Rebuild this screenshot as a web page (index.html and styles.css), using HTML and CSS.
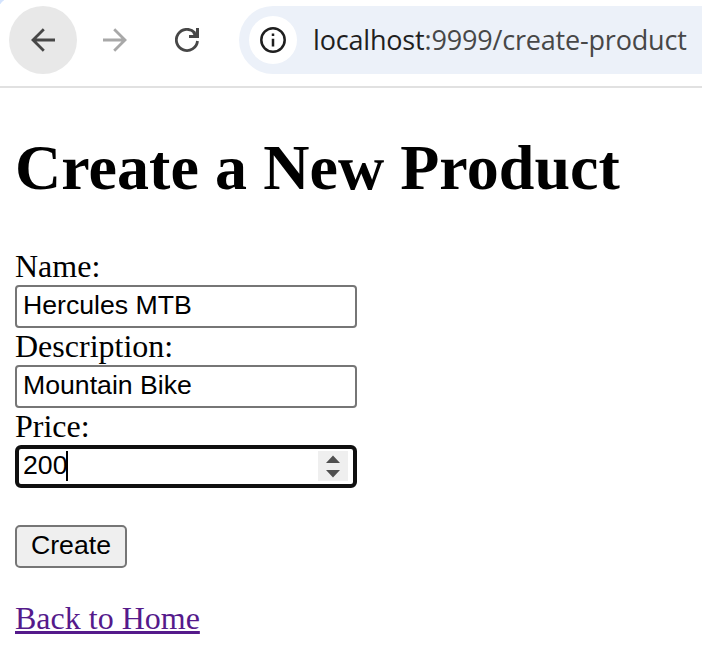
FILE: index.html
```html
<!DOCTYPE html>
<html lang="en">
<head>
<meta charset="utf-8">
<title>Create a New Product</title>
<link rel="stylesheet" href="styles.css">
</head>
<body>
<header class="toolbar">
  <span class="nav-button nav-button-active">
    <svg width="24" height="24" viewBox="0 0 24 24" fill="none" stroke="#474747" stroke-width="2.8"><path d="M24 12H2.500M12.800 1.200L2 12l10.800 10.800"/></svg>
  </span>
  <span class="nav-button">
    <svg width="24" height="24" viewBox="0 0 24 24" fill="none" stroke="#a8a8a8" stroke-width="2.8"><path d="M0 12h21.500M11.200 1.200L22 12 11.200 22.800"/></svg>
  </span>
  <span class="nav-button">
    <svg width="24" height="24" viewBox="0 0 24 24" fill="none" stroke="#474747" stroke-width="2.8"><path d="M22.500 13A10.600 10.600 0 1 1 19.800 4.800"/><path d="M21 0h3v10H14V7h4.500l-1-1.800 2-2L21 4.500z" fill="#474747" stroke="none"/></svg>
  </span>
  <div class="address">
    <span class="site-info">
      <svg width="26" height="26" viewBox="0 0 26 26" fill="none" stroke="#1f1f1f" stroke-width="2.500"><circle cx="13" cy="13" r="11.700"/><path d="M13 11.800v7.700M13 6.500v2.600"/></svg>
    </span>
    <span class="url"><span class="host">localhost</span>:9999/create-product</span>
  </div>
</header>
<main class="page">
  <h1>Create a New Product</h1>
  <form>
    <label for="name">Name:</label>
    <input id="name" class="field" type="text" value="Hercules MTB">
    <label for="description">Description:</label>
    <input id="description" class="field" type="text" value="Mountain Bike">
    <label for="price">Price:</label>
    <div class="price">
      <input id="price" class="field field-focused" type="text" value="200">
      <span class="caret"></span>
      <span class="spinner">
        <svg width="30" height="30" viewBox="0 0 30 30" fill="#505050"><path d="M8 12L15 4.500 22 12zM8 19h14l-7 7.500z"/></svg>
      </span>
    </div>
    <button type="button">Create</button>
  </form>
  <a href="#">Back to Home</a>
</main>
</body>
</html>
```
FILE: styles.css
```css
* { box-sizing: border-box; }
body {
  margin: 0;
  background: radial-gradient(circle at 8px 8px, #fff 8px, #d3e3fd 9px) 0 0 / 4px 4px no-repeat, #fff;
  color: #000;
  font: 32px/37px "Liberation Serif", "Times New Roman", serif;
  overflow: hidden;
}
.toolbar {
  display: flex;
  height: 88px;
  padding: 6px 0 0 9px;
  border-bottom: 2px solid #e1e1e1;
}
.nav-button {
  display: flex;
  flex: none;
  align-items: center;
  justify-content: center;
  width: 68px;
  height: 68px;
  margin-right: 4px;
  border-radius: 50%;
}
.nav-button-active { background: #e8e8e8; }
.address {
  display: flex;
  flex: 1;
  align-items: center;
  height: 68px;
  margin-left: 14px;
  padding-left: 10px;
  border-radius: 34px 0 0 34px;
  background: #ecf1f9;
}
.site-info {
  display: flex;
  flex: none;
  align-items: center;
  justify-content: center;
  width: 48px;
  height: 48px;
  border-radius: 50%;
  background: #fff;
}
.url {
  margin-left: 16px;
  color: #474747;
  font: 27px/36px "Open Sans", sans-serif;
  letter-spacing: -0.18px;
  white-space: nowrap;
}
.host { color: #1f1f1f; }
.page { padding: 43px 15px 0; }
h1 {
  margin: 0 0 43px;
  font-size: 64px;
  line-height: 74px;
  letter-spacing: 0.06px;
}
label { display: block; }
.field {
  display: block;
  width: 342px;
  height: 43px;
  padding: 0 6px 2px;
  border: 2px solid #767676;
  border-radius: 4px;
  outline: 0;
  background: #fff;
  color: #000;
  font: 26.67px/37px "Liberation Sans", Arial, sans-serif;
}
.field-focused {
  padding: 0 4px 2px;
  border: 4px solid #101010;
  border-radius: 6px;
}
.price {
  position: relative;
  width: 342px;
}
.caret {
  position: absolute;
  top: 6px;
  left: 51px;
  width: 2px;
  height: 30px;
  background: #000;
}
.spinner {
  position: absolute;
  top: 6px;
  right: 9px;
  width: 30px;
  height: 30px;
  background: #efefef;
}
.spinner svg { display: block; }
button {
  display: block;
  width: 112px;
  height: 43px;
  margin: 37px 0 32px;
  padding: 0 0 2px;
  border: 2px solid #767676;
  border-radius: 5px;
  background: #efefef;
  color: #000;
  font: 26.67px/37px "Liberation Sans", Arial, sans-serif;
}
a {
  color: #551a8b;
  text-decoration-thickness: 3px;
  text-underline-offset: 2px;
}
```
